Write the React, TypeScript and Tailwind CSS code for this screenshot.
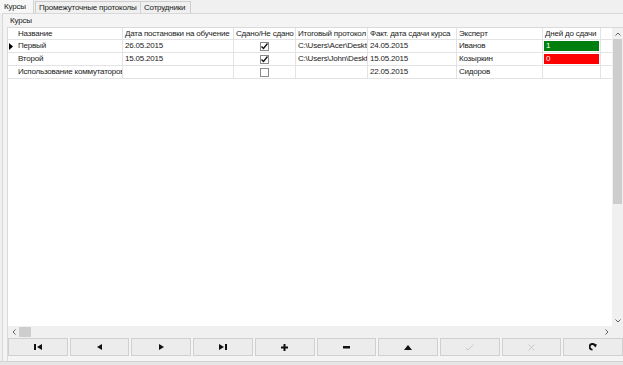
const font = { fontFamily: "Tahoma, 'Liberation Sans', sans-serif" };

const cols = [
  { title: "Название", w: "w-[107px]" },
  { title: "Дата постановки на обучение", w: "w-[111px]" },
  { title: "Сдано/Не сдано", w: "w-[62px]" },
  { title: "Итоговый протокол", w: "w-[72px]" },
  { title: "Факт. дата сдачи курса", w: "w-[89px]" },
  { title: "Эксперт", w: "w-[86px]" },
  { title: "Дней до сдачи", w: "w-[58px]" },
];

const rows = [
  { name: "Первый", start: "26.05.2015", done: true, file: "C:\\Users\\Acer\\Desktop", fact: "24.05.2015", expert: "Иванов", days: "1", color: "bg-[#007f0e]", current: true },
  { name: "Второй", start: "15.05.2015", done: true, file: "C:\\Users\\John\\Desktop", fact: "15.05.2015", expert: "Козыркин", days: "0", color: "bg-[#ff0000]", current: false },
  { name: "Использование коммутаторов", start: "", done: false, file: "", fact: "22.05.2015", expert: "Сидоров", days: "", color: "", current: false },
];

function Check({ on }: { on: boolean }) {
  return (
    <div className="w-[9px] h-[9px] border border-[#8a8a8a] bg-white flex items-center justify-center">
      {on && (
        <svg width="7" height="7" viewBox="0 0 7 7">
          <path d="M0.5 3.5 L2.5 5.5 L6.5 0.5" stroke="#111" strokeWidth="1.4" fill="none" />
        </svg>
      )}
    </div>
  );
}

function Cell({ w, children, className = "" }: { w: string; children?: React.ReactNode; className?: string }) {
  return (
    <div className={`${w} shrink-0 h-full border-r border-[#e3e3e3] px-[2px] flex items-center overflow-hidden whitespace-nowrap ${className}`}>
      {children}
    </div>
  );
}

function NavIcon({ kind }: { kind: string }) {
  const c = "#111";
  const dis = "#c8c8c8";
  switch (kind) {
    case "first":
      return (
        <svg width="8" height="6" viewBox="0 0 8 6">
          <rect x="0" y="0" width="2" height="6" fill={c} />
          <path d="M8 0 L3 3 L8 6 Z" fill={c} />
        </svg>
      );
    case "prev":
      return (
        <svg width="5" height="6" viewBox="0 0 5 6">
          <path d="M5 0 L0 3 L5 6 Z" fill={c} />
        </svg>
      );
    case "next":
      return (
        <svg width="5" height="6" viewBox="0 0 5 6">
          <path d="M0 0 L5 3 L0 6 Z" fill={c} />
        </svg>
      );
    case "last":
      return (
        <svg width="8" height="6" viewBox="0 0 8 6">
          <path d="M0 0 L5 3 L0 6 Z" fill={c} />
          <rect x="6" y="0" width="2" height="6" fill={c} />
        </svg>
      );
    case "plus":
      return (
        <svg width="7" height="7" viewBox="0 0 7 7">
          <rect x="2.5" y="0" width="2" height="7" fill={c} />
          <rect x="0" y="2.5" width="7" height="2" fill={c} />
        </svg>
      );
    case "minus":
      return (
        <svg width="7" height="3" viewBox="0 0 7 3">
          <rect x="0" y="0" width="7" height="2.5" fill={c} />
        </svg>
      );
    case "up":
      return (
        <svg width="8" height="5" viewBox="0 0 8 5">
          <path d="M0 5 L4 0 L8 5 Z" fill={c} />
        </svg>
      );
    case "check":
      return (
        <svg width="9" height="7" viewBox="0 0 9 7">
          <path d="M0.5 4 L3 6 L8.5 0.5" stroke={dis} strokeWidth="1" fill="none" />
        </svg>
      );
    case "cancel":
      return (
        <svg width="7" height="7" viewBox="0 0 7 7">
          <path d="M0.5 0.5 L6.5 6.5 M6.5 0.5 L0.5 6.5" stroke={dis} strokeWidth="1" fill="none" />
        </svg>
      );
    default:
      return (
        <svg width="8" height="8" viewBox="0 0 8 8">
          <path d="M6.2 3.5 A2.8 2.8 0 1 0 3.5 6.6" stroke={c} strokeWidth="1.8" fill="none" />
          <path d="M4.2 1 L7.8 1.2 L6.8 4.6 Z" fill={c} />
        </svg>
      );
  }
}

export default function App() {
  const buttons = ["first", "prev", "next", "last", "plus", "minus", "up", "check", "cancel", "refresh"];
  return (
    <div className="w-[623px] h-[365px] bg-[#f0f0f0] text-[8px] tracking-[-0.2px] text-[#222] overflow-hidden flex flex-col whitespace-nowrap" style={font}>
      {/* Tabs */}
      <div className="h-[13px] flex items-end shrink-0">
        <div className="h-[13px] w-[34px] pl-[4px] flex items-center bg-[#f7f7f7] border-r border-[#d2d2d2]">Курсы</div>
        <div className="h-[12px] w-[106px] ml-[1px] px-[3px] flex items-center border border-b-0 border-[#cfcfcf] bg-[#f0f0f0]">Промежуточные протоколы</div>
        <div className="h-[12px] w-[50px] px-[3px] flex items-center border border-b-0 border-l-0 border-[#cfcfcf] bg-[#f0f0f0]">Сотрудники</div>
      </div>

      {/* Panel */}
      <div className="flex-1 flex flex-col border-t border-l border-[#d8d8d8] ml-[2px] bg-[#f4f4f4]">
        <div className="h-[13px] pl-[7px] flex items-center shrink-0">Курсы</div>

        <div className="flex-1 flex flex-col ml-[4px] border-t border-l border-[#dadada]">
          <div className="flex-1 flex min-h-0">
            {/* Grid */}
            <div className="flex-1 bg-white flex flex-col">
              <div className="h-[12px] flex border-b border-[#e3e3e3]">
                <div className="w-[8px] shrink-0 h-full" />
                {cols.map((c) => (
                  <Cell key={c.title} w={c.w}>{c.title}</Cell>
                ))}
              </div>
              {rows.map((r) => (
                <div key={r.name} className="h-[13px] flex border-b border-[#e3e3e3]">
                  <div className="w-[8px] shrink-0 h-full flex items-center pl-[1px]">
                    {r.current && (
                      <svg width="4" height="7" viewBox="0 0 4 7">
                        <path d="M0 0 L4 3.5 L0 7 Z" fill="#000" />
                      </svg>
                    )}
                  </div>
                  <Cell w={cols[0].w}>{r.name}</Cell>
                  <Cell w={cols[1].w}>{r.start}</Cell>
                  <Cell w={cols[2].w} className="justify-center">
                    <Check on={r.done} />
                  </Cell>
                  <Cell w={cols[3].w}>{r.file}</Cell>
                  <Cell w={cols[4].w}>{r.fact}</Cell>
                  <Cell w={cols[5].w}>{r.expert}</Cell>
                  <div className="w-[58px] shrink-0 h-full border-r border-[#e3e3e3] p-[1px]">
                    <div className={`h-full ${r.color} text-white px-[2px] flex items-center`}>{r.days}</div>
                  </div>
                </div>
              ))}
            </div>

            {/* Vertical scrollbar */}
            <div className="w-[11px] shrink-0 bg-[#f0f0f0] flex flex-col items-center">
              <div className="h-[11px] flex items-center">
                <svg width="6" height="4" viewBox="0 0 6 4"><path d="M0.5 3.5 L3 1 L5.5 3.5" stroke="#606060" fill="none" /></svg>
              </div>
              <div className="w-[9px] h-[165px] bg-[#cdcdcd]" />
              <div className="flex-1" />
              <div className="h-[10px] flex items-center">
                <svg width="6" height="4" viewBox="0 0 6 4"><path d="M0.5 0.5 L3 3 L5.5 0.5" stroke="#606060" fill="none" /></svg>
              </div>
            </div>
          </div>

          {/* Horizontal scrollbar */}
          <div className="h-[12px] shrink-0 flex items-center bg-[#f0f0f0] pr-[11px]">
            <div className="w-[11px] flex justify-center">
              <svg width="4" height="6" viewBox="0 0 4 6"><path d="M3.5 0.5 L1 3 L3.5 5.5" stroke="#606060" fill="none" /></svg>
            </div>
            <div className="w-[12px] h-[10px] bg-[#cdcdcd]" />
            <div className="flex-1" />
            <div className="w-[11px] flex justify-center">
              <svg width="4" height="6" viewBox="0 0 4 6"><path d="M0.5 0.5 L3 3 L0.5 5.5" stroke="#606060" fill="none" /></svg>
            </div>
          </div>

          {/* Navigator */}
          <div className="h-[18px] shrink-0 flex gap-[2px]">
            {buttons.map((b) => (
              <div key={b} className="flex-1 h-full border border-[#d0d0d0] bg-[#ececec] flex items-center justify-center">
                <NavIcon kind={b} />
              </div>
            ))}
          </div>
          <div className="h-[5px] shrink-0" />
        </div>
      </div>
      <div className="h-[4px] shrink-0 bg-[#e6e6e6] border-t border-[#d4d4d4]" />
    </div>
  );
}
